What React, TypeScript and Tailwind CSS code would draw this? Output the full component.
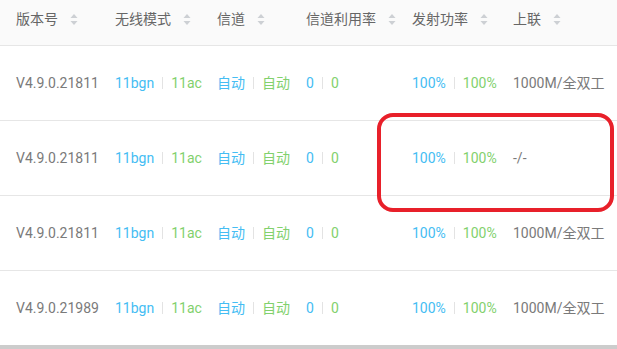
const cols = ["w-[99px]", "w-[102px]", "w-[89px]", "w-[106px]", "w-[101px]", "w-[120px]"]
const heads = ["版本号", "无线模式", "信道", "信道利用率", "发射功率", "上联"]

const rows = [
    { ver: "V4.9.0.21811", uplink: "1000M/全双工" },
    { ver: "V4.9.0.21811", uplink: "-/-" },
    { ver: "V4.9.0.21811", uplink: "1000M/全双工" },
    { ver: "V4.9.0.21989", uplink: "1000M/全双工" },
]

const SortIcon = () => (
    <svg width="8" height="13" viewBox="0 0 8 13" className="ml-3 shrink-0">
        <path d="M4 1 L7.5 5 L0.5 5 Z" fill="#cdd0d4" />
        <path d="M4 12 L7.5 8 L0.5 8 Z" fill="#cdd0d4" />
    </svg>
)

const Sep = () => <span className="inline-block w-px h-3 bg-[#e3e3e3] mx-2" />

const Pair = ({ a, b }: { a: string; b: string }) => (
    <div className="flex items-center">
        <span className="text-[#45bdf3]">{a}</span>
        <Sep />
        <span className="text-[#82d16d]">{b}</span>
    </div>
)

const App = () => {
    return (
        <main className="relative w-[617px] h-[349px] bg-white overflow-hidden text-[14px] font-['Roboto','Noto_Sans_CJK_SC',sans-serif]">
            <div className="flex h-[46px] bg-[#fafafa] border-b border-[#e6e6e6] pb-[6px]">
                {heads.map((h, i) => (
                    <div key={h} className={`${cols[i]} shrink-0 pl-4 flex items-center text-[#666] whitespace-nowrap`}>
                        {h}
                        <SortIcon />
                    </div>
                ))}
            </div>
            {rows.map((r, i) => (
                <div key={i} className="flex h-[75px] border-b border-[#e6e6e6] text-[#7a7a7a]">
                    <div className={`${cols[0]} shrink-0 pl-4 flex items-center whitespace-nowrap`}>{r.ver}</div>
                    <div className={`${cols[1]} shrink-0 pl-4 flex items-center`}><Pair a="11bgn" b="11ac" /></div>
                    <div className={`${cols[2]} shrink-0 pl-4 flex items-center`}><Pair a="自动" b="自动" /></div>
                    <div className={`${cols[3]} shrink-0 pl-4 flex items-center`}><Pair a="0" b="0" /></div>
                    <div className={`${cols[4]} shrink-0 pl-4 flex items-center`}><Pair a="100%" b="100%" /></div>
                    <div className={`${cols[5]} shrink-0 pl-4 flex items-center whitespace-nowrap`}>{r.uplink}</div>
                </div>
            ))}
            <div className="absolute left-0 right-0 bottom-0 h-[4px] bg-[#cccccc]" />
            <div className="absolute left-[377px] top-[113px] w-[237px] h-[99px] border-[4px] border-[#e8202a] rounded-[16px]" />
        </main>
    )
}

export default App
